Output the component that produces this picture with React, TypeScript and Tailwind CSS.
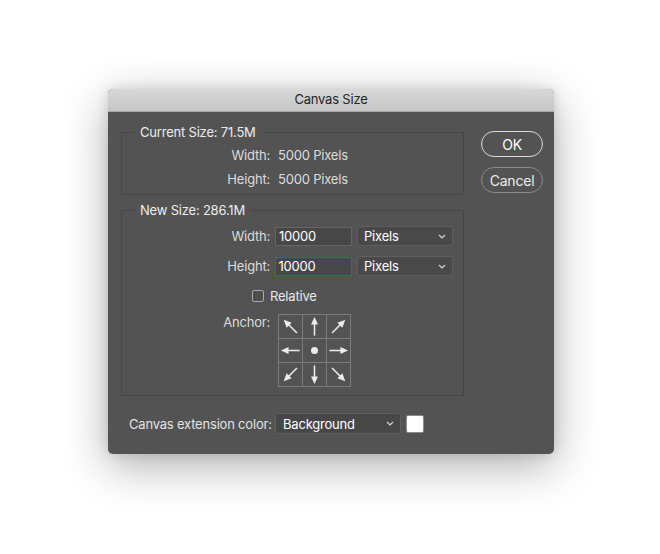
import React from "react";

const font = { fontFamily: "Inter, 'Noto Sans', 'Liberation Sans', sans-serif" };

function Chevron() {
  return (
    <svg width="8" height="5" viewBox="0 0 8 5" className="shrink-0">
      <path d="M1 1 L4 4 L7 1" fill="none" stroke="#d8d8d8" strokeWidth="1.2" />
    </svg>
  );
}

function Arrow({ rot }: { rot: number }) {
  return (
    <svg width="23" height="23" viewBox="0 0 24 24">
      <g transform={`rotate(${rot} 12 12)`}>
        <line x1="12" y1="21.5" x2="12" y2="8" stroke="#ececec" strokeWidth="1.6" />
        <polygon points="12,2 8.3,10 15.7,10" fill="#ececec" />
      </g>
    </svg>
  );
}

function AnchorGrid() {
  const rots = [-45, 0, 45, -90, null, 90, -135, 180, 135];
  const widths = ["w-[24px]", "w-[24px]", "w-[23px]"];
  const heights = ["h-[24px]", "h-[24px]", "h-[23px]"];
  return (
    <div className="border border-[#7c7c7c] grid grid-cols-[24px_24px_23px] w-[73px]">
      {rots.map((r, i) => (
        <div
          key={i}
          className={
            widths[i % 3] +
            " " +
            heights[Math.floor(i / 3)] +
            " flex items-center justify-center border-[#7c7c7c] " +
            (i % 3 < 2 ? "border-r " : "") +
            (i < 6 ? "border-b " : "")
          }
        >
          {r === null ? (
            <div className="w-[7px] h-[7px] rounded-full bg-[#ececec]" />
          ) : (
            <Arrow rot={r} />
          )}
        </div>
      ))}
    </div>
  );
}

export default function App() {
  return (
    <div className="w-[660px] h-[554px] bg-white pt-[89px] pl-[108px] tracking-[-0.2px]" style={font}>
      <div className="w-[446px] h-[365px] rounded-[5px] overflow-hidden shadow-[0_12px_45px_rgba(0,0,0,0.32),0_0_12px_rgba(0,0,0,0.12)] bg-[#535353] flex flex-col">
        {/* Title bar */}
        <div className="h-[23px] shrink-0 bg-gradient-to-b from-[#d8d8d8] to-[#c6c6c6] border-b border-[#a8a8a8] flex items-center justify-center text-[13px] text-[#262626]">
          Canvas Size
        </div>
        {/* Body */}
        <div className="flex flex-col">
          <div className="flex">
            <div className="ml-[13px] w-[343px] flex flex-col mt-[12px]">
              {/* Current Size */}
              <fieldset className="border border-[#474747] h-[71px]">
                <legend className="ml-[12px] px-[6px] text-[13px] leading-[16px] text-[#ececec]">
                  Current Size: 71.5M
                </legend>
                <div className="mt-[7px] flex flex-col gap-[8px] text-[13px] leading-[16px] text-[#dcdcdc]">
                  <div className="flex">
                    <div className="w-[148px] text-right">Width:</div>
                    <div className="ml-[8px]">5000 Pixels</div>
                  </div>
                  <div className="flex">
                    <div className="w-[148px] text-right">Height:</div>
                    <div className="ml-[8px]">5000 Pixels</div>
                  </div>
                </div>
              </fieldset>
              {/* New Size */}
              <fieldset className="mt-[7px] border border-[#474747] h-[194px]">
                <legend className="ml-[12px] px-[6px] text-[13px] leading-[16px] text-[#ececec]">
                  New Size: 286.1M
                </legend>
                <div className="mt-[8px] flex flex-col text-[13px] leading-[16px] text-[#dcdcdc]">
                  <div className="flex items-center">
                    <div className="w-[148px] text-right">Width:</div>
                    <div className="ml-[5px] w-[77px] h-[19px] bg-[#474747] border border-[#656565] flex items-center pl-[3px] text-[13px] text-white">
                      10000
                    </div>
                    <div className="ml-[5px] w-[96px] h-[20px] bg-[#494949] border border-[#5e5e5e] rounded-[2px] flex items-center justify-between pl-[6px] pr-[6px] text-white">
                      <span>Pixels</span>
                      <Chevron />
                    </div>
                  </div>
                  <div className="flex items-center mt-[10px]">
                    <div className="w-[148px] text-right">Height:</div>
                    <div className="ml-[5px] w-[77px] h-[19px] bg-[#474747] border-[1.5px] border-[#2f62b4] flex items-center pl-[2.5px] text-[13px] text-white">
                      10000
                    </div>
                    <div className="ml-[5px] w-[96px] h-[20px] bg-[#494949] border border-[#5e5e5e] rounded-[2px] flex items-center justify-between pl-[6px] pr-[6px] text-white">
                      <span>Pixels</span>
                      <Chevron />
                    </div>
                  </div>
                  <div className="flex items-center mt-[12px] h-[16px]">
                    <div className="ml-[130px] w-[12px] h-[12px] rounded-[2px] border border-[#a8a8a8] bg-[#4e4e4e]" />
                    <div className="ml-[6px] text-[#e8e8e8]">Relative</div>
                  </div>
                  <div className="flex items-start mt-[10px]">
                    <div className="w-[148px] text-right">Anchor:</div>
                    <div className="ml-[8px]">
                      <AnchorGrid />
                    </div>
                  </div>
                </div>
              </fieldset>
            </div>
            {/* Buttons */}
            <div className="ml-[17px] mt-[19px] flex flex-col gap-[10px]">
              <div className="w-[62px] h-[26px] rounded-full border-[1.5px] border-[#dcdcdc] flex items-center justify-center text-[14px] text-white">
                OK
              </div>
              <div className="w-[62px] h-[26px] rounded-full border border-[#8a8a8a] flex items-center justify-center text-[14px] text-[#ececec]">
                Cancel
              </div>
            </div>
          </div>
          {/* Canvas extension color */}
          <div className="mt-[17px] flex items-center text-[13px] leading-[16px]">
            <div className="ml-[21px] w-[141px] whitespace-nowrap text-[#e2e2e2]">Canvas extension color:</div>
            <div className="ml-[5px] w-[126px] h-[21px] bg-[#474747] border border-[#5e5e5e] rounded-[2px] flex items-center justify-between pl-[7px] pr-[6px] text-white">
              <span>Background</span>
              <Chevron />
            </div>
            <div className="ml-[5px] w-[18px] h-[18px] bg-white border border-[#8a8a8a] rounded-[2px]" />
          </div>
        </div>
      </div>
    </div>
  );
}
